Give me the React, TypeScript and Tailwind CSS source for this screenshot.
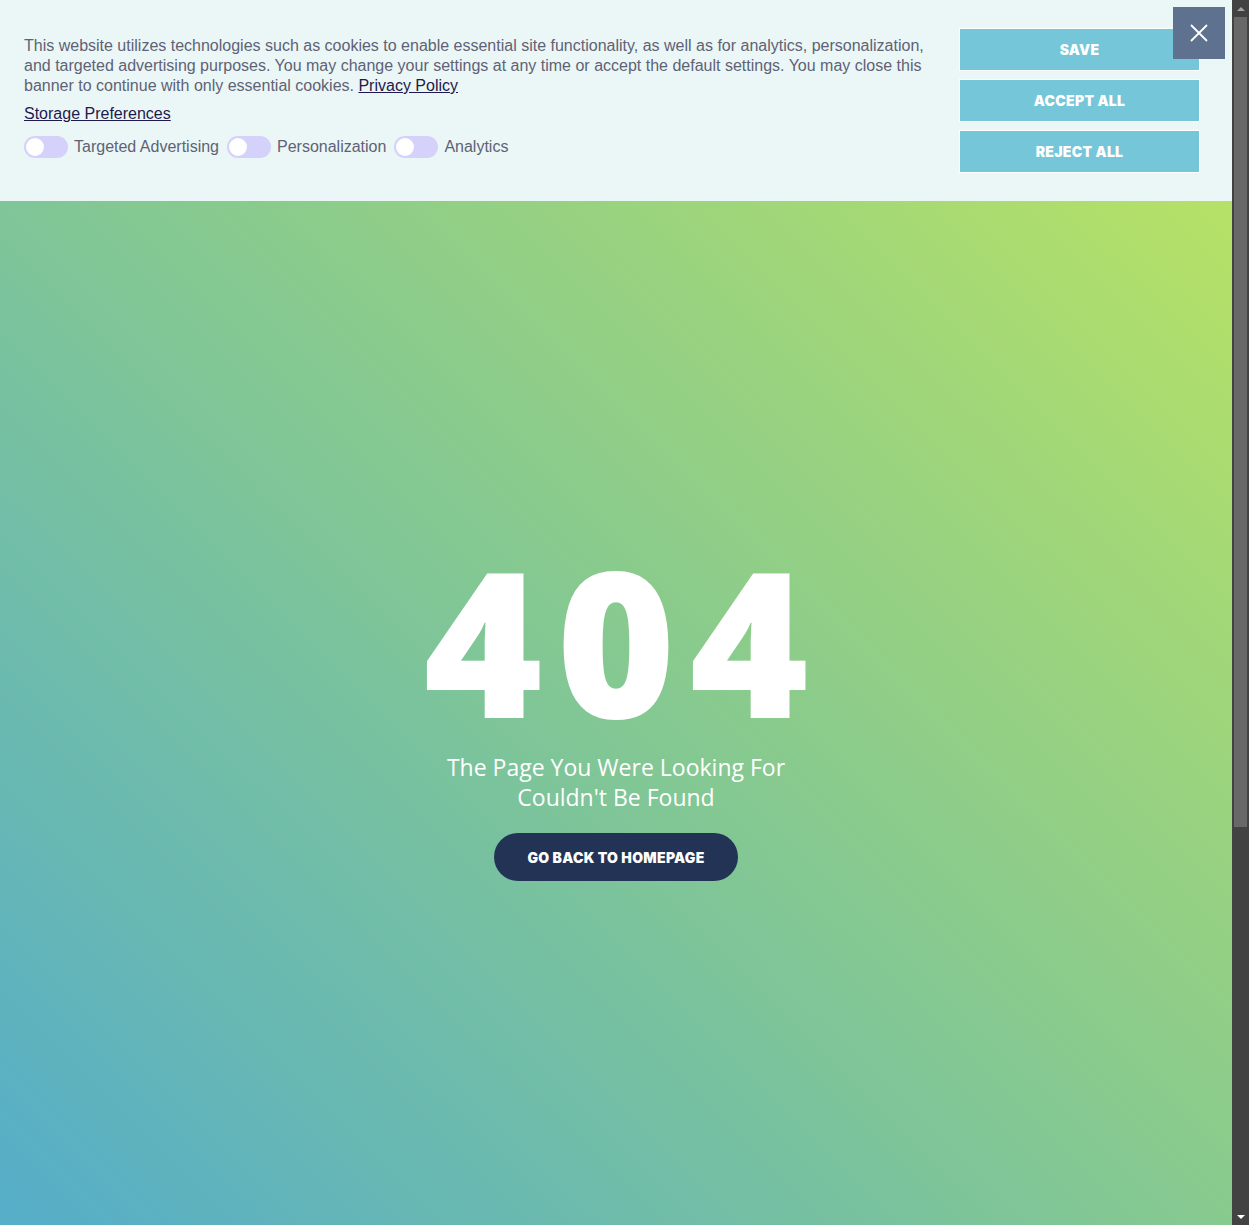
import React, { useState } from "react";

const Toggle = ({ label }: { label: string }) => {
  const [on, setOn] = useState(false);
  return (
    <label className="flex items-center gap-[6px] cursor-pointer">
      <button
        onClick={() => setOn(!on)}
        className={`relative w-[44px] h-[22px] rounded-full ${on ? "bg-[#74c6d8]" : "bg-[#d4d1fb]"}`}
      >
        <span
          className={`absolute top-[2px] w-[18px] h-[18px] rounded-full bg-white ${on ? "left-[24px]" : "left-[2px]"}`}
        />
      </button>
      <span className="text-[16px] text-[#5f6275]">{label}</span>
    </label>
  );
};

const CookieBanner = () => (
  <div className="absolute top-0 left-0 right-0 h-[201px] bg-[#ebf7f7] flex pl-[24px] pt-[36px] font-['Liberation_Sans',Arial,sans-serif]">
    <div className="w-[906px]">
      <p className="text-[16px] leading-[20px] text-[#5f6275]">
        This website utilizes technologies such as cookies to enable essential site functionality, as well as for
        analytics, personalization, and targeted advertising purposes. You may change your settings at any time or
        accept the default settings. You may close this banner to continue with only essential cookies.{" "}
        <a href="#" className="underline text-[#1f1a4d]">
          Privacy Policy
        </a>
      </p>
      <a href="#" className="block mt-[8px] text-[16px] leading-[20px] underline text-[#1f1a4d]">
        Storage Preferences
      </a>
      <div className="flex items-center gap-[8px] mt-[11px]">
        <Toggle label="Targeted Advertising" />
        <Toggle label="Personalization" />
        <Toggle label="Analytics" />
      </div>
    </div>
    <div className="ml-[29px] mt-[-8px] flex flex-col gap-[8px] w-[241px] font-['Inter',sans-serif]">
      {["Save", "Accept All", "Reject All"].map((b) => (
        <button
          key={b}
          className="h-[43px] bg-[#75c6d8] border border-white text-white text-[14px] font-black uppercase tracking-[0.3px]"
        >
          {b}
        </button>
      ))}
    </div>
    <button className="absolute top-[7px] right-[7px] w-[52px] h-[52px] bg-[#5e718e] flex items-center justify-center">
      <svg width="20" height="20" viewBox="0 0 20 20" stroke="white" strokeWidth="1.8" fill="none">
        <path d="M2 2 L18 18 M18 2 L2 18" />
      </svg>
    </button>
  </div>
);

const Scrollbar = () => (
  <div className="w-[17px] h-full bg-[#424242] flex flex-col items-center">
    <div className="h-[17px] flex items-center justify-center">
      <div className="w-0 h-0 border-l-[4px] border-r-[4px] border-b-[4px] border-l-transparent border-r-transparent border-b-[#a3a3a3]" />
    </div>
    <div className="w-[13px] h-[810px] bg-[#686868]" />
    <div className="flex-1" />
    <div className="h-[17px] flex items-center justify-center">
      <div className="w-0 h-0 border-l-[4px] border-r-[4px] border-t-[4px] border-l-transparent border-r-transparent border-t-white" />
    </div>
  </div>
);

export default function App() {
  return (
    <div className="flex w-[1249px] h-[1225px] overflow-hidden">
      <div className="relative flex-1 h-full bg-[linear-gradient(to_top_right,#55adc9_0%,#82c794_45%,#bfe65e_100%)]">
        <div className="flex flex-col items-center pt-[534px] text-white">
          <h1 className="font-['Open_Sans',sans-serif] font-extrabold text-[203px] leading-[210px] tracking-[14px] pl-[14px]">
            404
          </h1>
          <p className="mt-[8px] font-['Open_Sans',sans-serif] text-[23px] leading-[30px] text-center">
            The Page You Were Looking For
            <br />
            Couldn't Be Found
          </p>
          <a
            href="#"
            className="mt-[21px] w-[244px] h-[48px] rounded-full bg-[#233356] flex items-center justify-center text-[14px] font-black uppercase tracking-[0.3px] font-['Inter',sans-serif]"
          >
            Go Back To Homepage
          </a>
        </div>
        <CookieBanner />
      </div>
      <Scrollbar />
    </div>
  );
}
